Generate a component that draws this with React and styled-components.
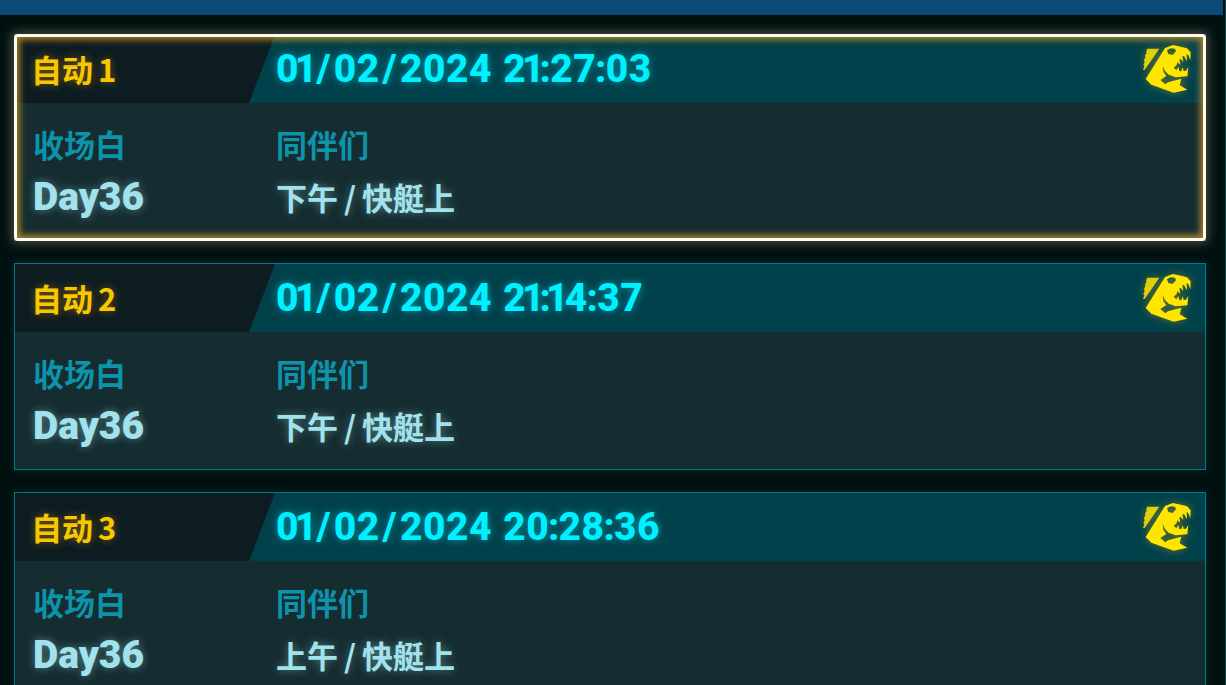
import React from "react";
import styled, { createGlobalStyle, css } from "styled-components";

const GlobalStyle = createGlobalStyle`
  * {
    box-sizing: border-box;
  }
  body {
    margin: 0;
    background: #000f0e;
    overflow: hidden;
  }
`;

const Screen = styled.div`
  height: 685px;
  overflow: hidden;
  background: #001110;
  border-right: 1px solid #004c54;
  font-family: "Noto Sans CJK SC", sans-serif;
`;

const TopBar = styled.div`
  height: 15px;
  margin-right: 2px;
  background: #0b4a77;
`;

const SlotList = styled.div`
  display: flex;
  flex-direction: column;
  gap: 22px;
  padding: 19px 19px 0 14px;
`;

const Slot = styled.div`
  position: relative;
  flex: none;
  height: 207px;
  border: 1px solid #007a8b;
  background: #152d31;
  box-shadow: 0 0 9px rgba(0, 70, 70, 0.45);

  ${(p) =>
    p.$selected &&
    css`
      box-shadow: 0 0 10px 2px rgba(150, 135, 110, 0.5);

      &::after {
        content: "";
        position: absolute;
        inset: -1px;
        border: 3px solid #fdfbf2;
        border-radius: 4px;
        box-shadow: inset 0 0 6px 3px rgba(190, 142, 38, 0.85);
      }
    `}
`;

const SlotHeader = styled.div`
  display: flex;
  align-items: center;
  height: 68px;
  background: #01414b;
`;

const SlotName = styled.div`
  width: 261px;
  height: 68px;
  padding-left: 16px;
  background: #0c1c21;
  clip-path: polygon(0 0, 260px 0, 234px 100%, 0 100%);
  color: #f6c800;
  font-size: 31px;
  font-weight: 700;
  line-height: 67px;
  word-spacing: -2px;
  text-shadow: 0 0 8px rgba(246, 150, 0, 0.5);
`;

const squareType = css`
  font-family: Roboto, sans-serif;
  font-size: 39px;
  line-height: 40px;
  white-space: pre;
`;

const SavedAt = styled.div`
  ${squareType}
  flex: 1;
  color: #00f0ff;
  font-weight: 800;
  text-shadow: 0 0 8px rgba(0, 240, 255, 0.5);
`;

const Glyph = styled.span`
  letter-spacing: ${(p) => p.$space}px;
`;

const Emblem = styled.svg`
  width: 52px;
  height: 52px;
  margin-right: 12px;
  fill: #ffe500;
  filter: drop-shadow(0 0 4px rgba(255, 200, 0, 0.4));
`;

const SlotBody = styled.div`
  display: grid;
  grid-template-columns: 243px 1fr;
  grid-template-rows: 53px 53px;
  padding: 14px 0 0 18px;
`;

const Caption = styled.div`
  color: #0d93aa;
  font-size: 31px;
  font-weight: 700;
  line-height: 53px;
`;

const Place = styled.div`
  color: #a2e2ec;
  font-size: 31px;
  font-weight: 700;
  line-height: 53px;
  word-spacing: -1px;
  text-shadow: 0 0 8px rgba(162, 226, 236, 0.45);
`;

const Day = styled.div`
  ${squareType}
  padding-top: 7px;
  color: #a2e2ec;
  font-weight: 900;
  text-shadow: 0 0 8px rgba(162, 226, 236, 0.45);
`;

// extra room on each side of the characters that do not sit on the digit width
const sideSpace = { "1": -4.2, "/": 2.8, ":": -1.2, " ": 0.5 };

function Stamp({ value }) {
  const chars = value.split("");
  return (
    <SavedAt>
      {chars.map((ch, i) => (
        <Glyph key={i} $space={0.5 + (sideSpace[ch] || 0) + (sideSpace[chars[i + 1]] || 0)}>
          {ch}
        </Glyph>
      ))}
    </SavedAt>
  );
}

function FishEmblem() {
  return (
    <Emblem viewBox="425 275 156 156">
      <path opacity="0.85" d="M444 292 L480 292 L436 356 L431 355 L435 345 L432 340 L436 333 L434 326 L438 318 L437 311 L441 308 L441 298 Z" />
      <path
        fillRule="evenodd"
        d="M497 290 L521 281 L538 285 L563 291 L574 303 L573 327 L567 312 L562 307 L563 330 L554 314 L549 315 L552 332 L543 322 L540 325 L543 340 L534 333 L532 341 L523 349 L531 357 L537 347 L540 359 L546 360 L550 348 L553 359 L560 358 L567 346 L564 375 L529 378 L508 370 L497 359 L490 344 L492 362 L501 374 L483 386 L498 399 L506 393 L546 382 L541 402 L564 415 L523 424 L456 400 L439 383 Z M503 297 L514 291 L527 292 L530 300 L520 311 L507 308 Z"
      />
    </Emblem>
  );
}

const slots = [
  { name: "自动 1", savedAt: "01/02/2024 21:27:03", place: "下午 / 快艇上", selected: true },
  { name: "自动 2", savedAt: "01/02/2024 21:14:37", place: "下午 / 快艇上" },
  { name: "自动 3", savedAt: "01/02/2024 20:28:36", place: "上午 / 快艇上" },
];

function App() {
  return (
    <Screen>
      <GlobalStyle />
      <TopBar />
      <SlotList>
        {slots.map((slot) => (
          <Slot key={slot.name} $selected={slot.selected}>
            <SlotHeader>
              <SlotName>{slot.name}</SlotName>
              <Stamp value={slot.savedAt} />
              <FishEmblem />
            </SlotHeader>
            <SlotBody>
              <Caption>收场白</Caption>
              <Caption>同伴们</Caption>
              <Day>Day36</Day>
              <Place>{slot.place}</Place>
            </SlotBody>
          </Slot>
        ))}
      </SlotList>
    </Screen>
  );
}

export default App;
